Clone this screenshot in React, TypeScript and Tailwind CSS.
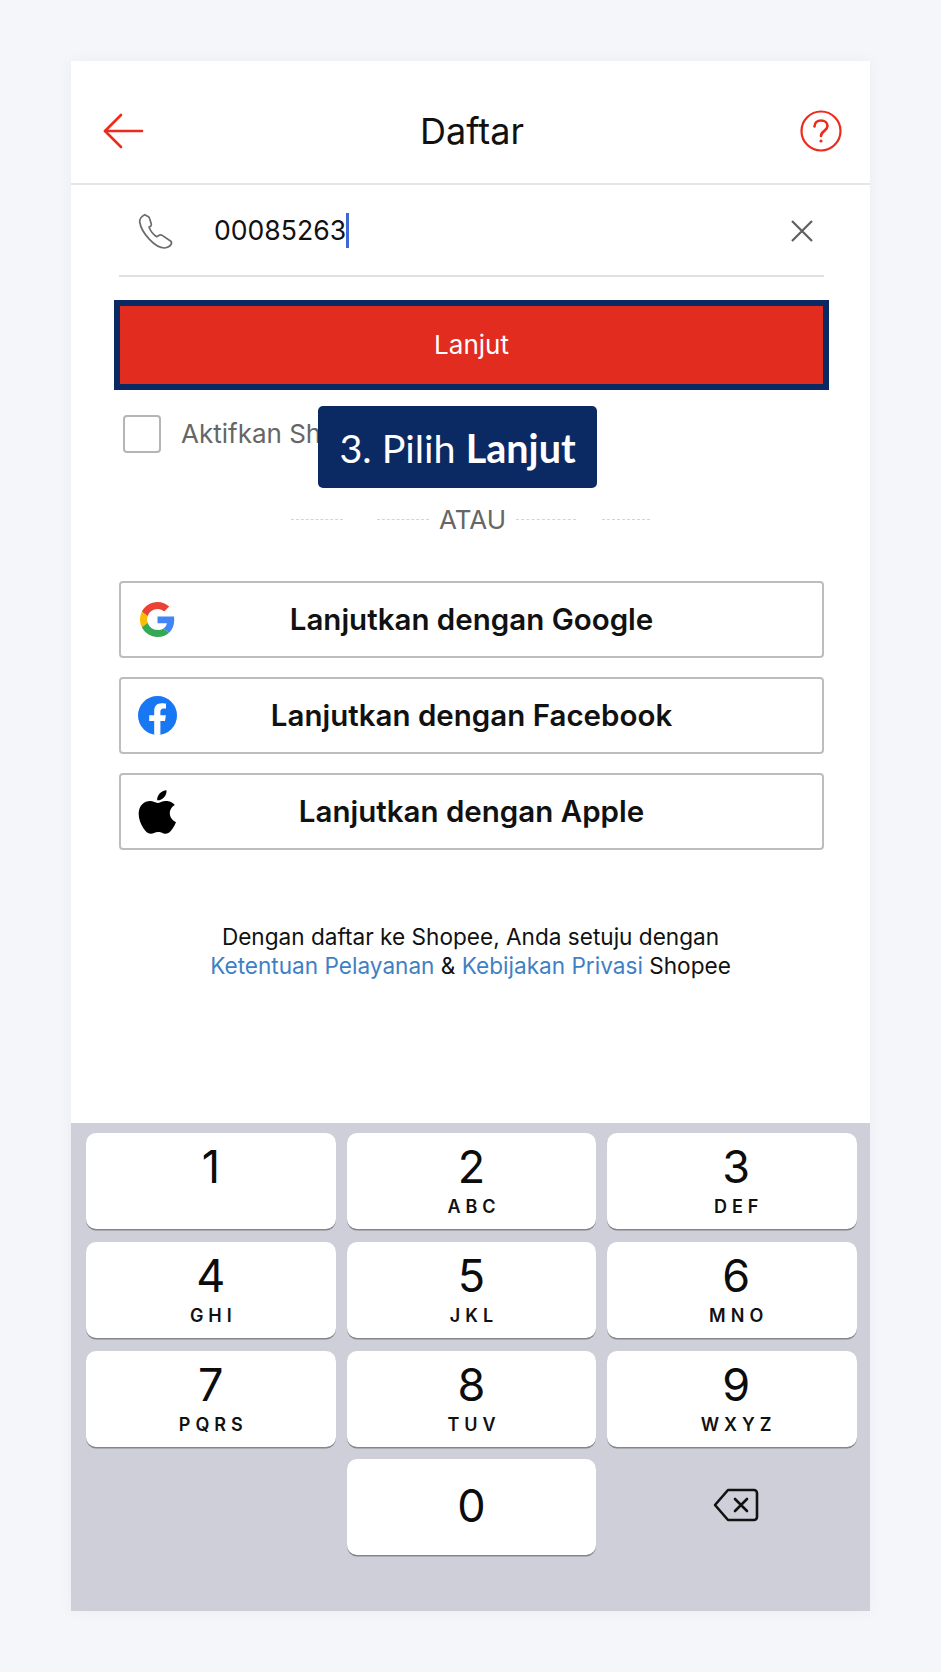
const FONT = "font-['Inter','Liberation_Sans',sans-serif]";

const KEYS = [
  { num: "1", letters: "" },
  { num: "2", letters: "ABC" },
  { num: "3", letters: "DEF" },
  { num: "4", letters: "GHI" },
  { num: "5", letters: "JKL" },
  { num: "6", letters: "MNO" },
  { num: "7", letters: "PQRS" },
  { num: "8", letters: "TUV" },
  { num: "9", letters: "WXYZ" },
];

function BackArrow() {
  return (
    <svg width="41" height="36" viewBox="0 0 41 36" fill="none" stroke="#ee2a1b" strokeWidth="2.6" strokeLinecap="round" strokeLinejoin="round">
      <path d="M39 18H2" />
      <path d="M18 2 2 18l16 16" />
    </svg>
  );
}

function HelpIcon() {
  return (
    <svg width="42" height="42" viewBox="0 0 42 42" fill="none" stroke="#ee2a1b" strokeWidth="2.2" strokeLinecap="round">
      <circle cx="21" cy="21" r="19.5" />
      <path d="M14.5 16.5c0-3.800 3-6 6.500-6s6.500 2.200 6.500 5.500c0 4.800-6.500 5-6.500 10" strokeWidth="2.6" />
      <circle cx="21" cy="31" r="1.600" fill="#ee2a1b" stroke="none" />
    </svg>
  );
}

function PhoneIcon() {
  return (
    <svg width="36" height="37" viewBox="0 0 36 37" fill="none" stroke="#6b6b6b" strokeWidth="1.700" strokeLinejoin="round">
      <path d="M6.700 1.700 10.500 3.800c.8.5 1 1.200 1.200 2L13.300 11c.2.900 0 1.700-.7 2.200l-1.600.8C12.500 18 15 21.500 18.700 23.700l2.500-1.500c1-.6 2-.5 3 .2l8.300 5.600c1.300 1 1.300 2.200.5 3.500-1 1.700-3.200 3-6.500 3.500C17 35 3.500 20 1.700 9 1.300 6.500 3.500 3 6.700 1.700Z" />
    </svg>
  );
}

function GoogleIcon() {
  return (
    <svg width="35" height="35" viewBox="0 0 48 48">
      <path fill="#EA4335" d="M24 9.500c3.540 0 6.710 1.220 9.210 3.600l6.850-6.850C35.900 2.380 30.470 0 24 0 14.620 0 6.510 5.380 2.560 13.220l7.980 6.190C12.430 13.720 17.740 9.500 24 9.500z" />
      <path fill="#4285F4" d="M46.980 24.550c0-1.570-.15-3.090-.38-4.550H24v9.020h12.940c-.58 2.960-2.260 5.480-4.780 7.180l7.730 6c4.510-4.180 7.090-10.360 7.090-17.650z" />
      <path fill="#FBBC05" d="M10.530 28.590c-.48-1.450-.76-2.990-.76-4.590s.27-3.140.76-4.590l-7.980-6.190C.92 16.460 0 20.120 0 24c0 3.880.92 7.540 2.560 10.780l7.970-6.190z" />
      <path fill="#34A853" d="M24 48c6.480 0 11.930-2.130 15.890-5.810l-7.730-6c-2.150 1.450-4.920 2.300-8.160 2.300-6.260 0-11.570-4.220-13.470-9.910l-7.980 6.190C6.510 42.620 14.620 48 24 48z" />
    </svg>
  );
}

function FacebookIcon() {
  return (
    <svg width="39" height="39" viewBox="0 0 39 39">
      <circle cx="19.500" cy="19.500" r="19.500" fill="#1877f2" />
      <path fill="#fff" d="M27 25l.9-5.700h-5.500v-3.700c0-1.600.8-3.100 3.200-3.100H28V7.700s-2.200-.4-4.400-.4c-4.500 0-7.400 2.700-7.400 7.700v4.300h-5V25h5v13.800a20 20 0 0 0 6.200 0V25H27Z" />
    </svg>
  );
}

function AppleIcon() {
  return (
    <svg width="38" height="44" viewBox="0 0 814 1000" fill="#000" preserveAspectRatio="none">
      <path d="M788 341c-6 4-107 61-107 188 0 147 129 199 133 200-1 3-21 71-68 141-42 61-86 122-153 122s-84-39-161-39c-75 0-102 40-163 40s-104-56-153-125C60 786 14 661 14 542c0-191 124-292 246-292 65 0 119 43 160 43 39 0 100-45 174-45 28 0 129 3 194 93ZM559 163c31-36 52-87 52-137 0-7-1-14-2-20-50 2-109 33-145 75-28 32-54 83-54 135 0 8 1 16 2 18 3 1 8 1 13 1 45 0 101-30 134-72Z" />
    </svg>
  );
}

function BackspaceIcon() {
  return (
    <svg width="46" height="36" viewBox="0 0 46 36" fill="none" stroke="#111" strokeWidth="2.600" strokeLinecap="round" strokeLinejoin="round">
      <path d="M15 3h26a3 3 0 0 1 3 3v24a3 3 0 0 1-3 3H15L2 18 15 3Z" />
      <path d="m22 12 12 12M34 12 22 24" />
    </svg>
  );
}

function SocialButton({ label, icon }: { label: string; icon: React.ReactNode }) {
  return (
    <div className="relative flex h-[77px] items-center justify-center rounded-[4px] border-2 border-[#bdbdbd] bg-white">
      <span className="absolute left-[16px] flex h-[44px] w-[40px] items-center justify-center">{icon}</span>
      <span className="text-[29.500px] font-semibold leading-none text-[#111]">{label}</span>
    </div>
  );
}

function Key({ num, letters, shift }: { num: string; letters: string; shift: boolean }) {
  return (
    <div className={`flex h-[96px] flex-col items-center rounded-[10px] bg-white shadow-[0_1.500px_0_#85858c] ${shift ? "pl-[8px]" : ""}`}>
      <span className="mt-[9px] text-[45px] leading-[50px] font-normal text-[#0c0c0c]">{num}</span>
      {letters && (
        <span className="mt-[5px] pl-[5px] text-[18px] leading-[20px] font-semibold tracking-[5px] text-[#111]">{letters}</span>
      )}
    </div>
  );
}

export default function App() {
  return (
    <div className={`${FONT} min-h-[1672px] bg-[#f5f6fa] pt-[61px]`}>
      <div className="relative mx-auto flex h-[1550px] w-[799px] flex-col bg-white shadow-[0_0_12px_rgba(120,125,150,0.08)]">
        <header className="flex h-[124px] shrink-0 items-center justify-between border-b-2 border-[#e6e6e6] pl-[32px] pr-[28px] pt-[18px]">
          <BackArrow />
          <h1 className="text-[36px] font-normal text-[#111]">Daftar</h1>
          <HelpIcon />
        </header>

        <div className="ml-[48px] mr-[46px] flex h-[92px] shrink-0 items-center border-b-2 border-[#e0e0e0] pl-[19px] pr-[10px] pt-[2px]">
          <PhoneIcon />
          <div className="ml-[40px] flex flex-1 items-center text-[26.600px] text-[#111]">
            00085263
            <span className="h-[35px] w-[3px] bg-[#3f67d6]" />
          </div>
          <svg width="24" height="24" viewBox="0 0 24 24" stroke="#5f5f5f" strokeWidth="2.200" fill="none">
            <path d="M2 2l20 20M22 2 2 22" />
          </svg>
        </div>

        <button className="ml-[43px] mr-[41px] mt-[23px] flex h-[90px] shrink-0 items-center justify-center border-[6px] border-[#0b2a63] bg-[#e32c20] pb-[2px] text-[26px] text-white">
          Lanjut
        </button>

        <div className="ml-[52px] mt-[25px] flex h-[37px] items-center">
          <span className="h-[38px] w-[38px] rounded-[4px] border-2 border-[#b5b5b5]" />
          <span className="ml-[20px] text-[26px] text-[#666]">Aktifkan Shopee</span>
        </div>

        <div className="mt-[51px] flex h-[32px] items-center justify-center text-[26px] text-[#666]">
          <span className="mr-[34px] w-[52px] border-t border-dashed border-[#d4d4d4]" />
          <span className="mr-[10px] w-[52px] border-t border-dashed border-[#d4d4d4]" />
          ATAU
          <span className="ml-[10px] w-[60px] border-t border-dashed border-[#d4d4d4]" />
          <span className="ml-[26px] w-[48px] border-t border-dashed border-[#d4d4d4]" />
        </div>

        <div className="ml-[48px] mr-[46px] mt-[46px] flex flex-col gap-[19px]">
          <SocialButton label="Lanjutkan dengan Google" icon={<GoogleIcon />} />
          <SocialButton label="Lanjutkan dengan Facebook" icon={<FacebookIcon />} />
          <SocialButton label="Lanjutkan dengan Apple" icon={<AppleIcon />} />
        </div>

        <p className="mt-[72px] text-center text-[22.600px] leading-[29px] text-[#111]">
          Dengan daftar ke Shopee, Anda setuju dengan
          <br />
          <span className="text-[#3f7fc4]">Ketentuan Pelayanan</span> &amp; <span className="text-[#3f7fc4]">Kebijakan Privasi</span> Shopee
        </p>

        <div className="mt-auto h-[488px] bg-[#cfcfd9] pl-[15px] pr-[13px] pt-[10px]">
          <div className="grid grid-cols-3 gap-x-[11px] gap-y-[12.800px]">
            {KEYS.map((k, i) => (
              <Key key={k.num} num={k.num} letters={k.letters} shift={i % 3 === 2} />
            ))}
            <div />
            <div className="flex h-[96px] items-center justify-center rounded-[10px] bg-white pb-[3px] text-[45px] text-[#0c0c0c] shadow-[0_1.500px_0_#85858c]">
              0
            </div>
            <div className="flex items-center justify-center pb-[4px] pl-[7px]">
              <BackspaceIcon />
            </div>
          </div>
        </div>

        {/* tutorial callout over the checkbox row */}
        <div className="absolute left-[247px] top-[345px] flex h-[82px] w-[279px] items-center justify-center rounded-[5px] bg-[#0b2a63] pt-[1px] font-['Lato',sans-serif] text-[39.500px] text-white">
          3. Pilih&nbsp;<b className="font-bold">Lanjut</b>
        </div>
      </div>
    </div>
  );
}
